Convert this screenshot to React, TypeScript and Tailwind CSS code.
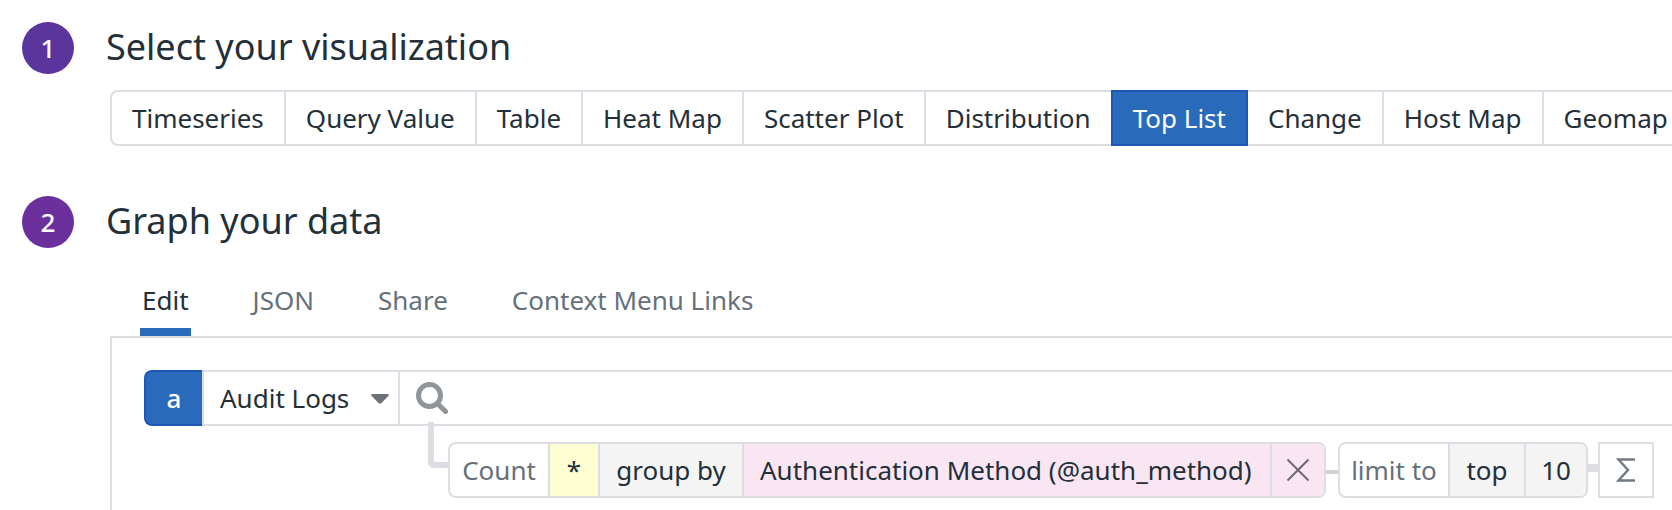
import { useState, type ReactNode } from "react";

const VISUALIZATIONS = [
  "Timeseries",
  "Query Value",
  "Table",
  "Heat Map",
  "Scatter Plot",
  "Distribution",
  "Top List",
  "Change",
  "Host Map",
  "Geomap",
];

const TABS = ["Edit", "JSON", "Share", "Context Menu Links"];

function StepHeading({ step, color, children }: { step: number; color: string; children: ReactNode }) {
  return (
    <div className="flex items-center gap-8">
      <span
        className={`flex size-[52px] shrink-0 items-center justify-center rounded-full font-medium text-white ${color}`}
      >
        {step}
      </span>
      <h2 className="pb-0.5 text-4xl">{children}</h2>
    </div>
  );
}

function VisualizationPicker() {
  const [selected, setSelected] = useState("Top List");
  return (
    <div className="mt-4 ml-[88px] flex">
      {VISUALIZATIONS.map((name) => (
        <button
          key={name}
          type="button"
          aria-pressed={selected === name}
          onClick={() => setSelected(name)}
          className={`-ml-0.5 h-14 shrink-0 border-2 px-5 first:ml-0 first:rounded-l-lg last:rounded-r-lg ${
            selected === name
              ? "relative border-[#1d56b6] bg-[#2a6aba] text-white"
              : "border-[#dedde3] bg-white"
          }`}
        >
          {name}
        </button>
      ))}
    </div>
  );
}

function TabBar() {
  const [active, setActive] = useState("Edit");
  return (
    <div role="tablist" className="mt-8 ml-[118px] flex gap-[60px]">
      {TABS.map((name) => (
        <button
          key={name}
          type="button"
          role="tab"
          aria-selected={active === name}
          onClick={() => setActive(name)}
          className={`h-14 shrink-0 border-b-8 px-0.5 pb-2 ${
            active === name ? "border-[#2a6aba]" : "border-transparent text-[#66707a]"
          }`}
        >
          {name}
        </button>
      ))}
    </div>
  );
}

function SearchRow() {
  return (
    <div className="flex h-14">
      <span className="flex w-[58px] shrink-0 items-center justify-center rounded-l-lg border-2 border-r-0 border-[#1d56b6] bg-[#2a6aba] font-medium text-white">
        a
      </span>
      <div className="relative w-[198px] shrink-0 border-2 border-[#dedde3]">
        <select
          aria-label="Data source"
          defaultValue="Audit Logs"
          className="h-full w-full appearance-none bg-transparent pl-4 outline-none"
        >
          <option>Audit Logs</option>
        </select>
        <svg
          viewBox="0 0 18 10"
          className="pointer-events-none absolute top-[22px] right-2 h-2.5 w-5 fill-[#6b7178]"
          aria-hidden="true"
        >
          <path d="M1 0H17Q18.500 .6 17.500 1.800L10.500 9Q9 10.400 7.500 9L.5 1.800Q-.5 .6 1 0Z" />
        </svg>
      </div>
      <label className="flex flex-1 items-center gap-4 border-y-2 border-[#dedde3] pl-4">
        <svg viewBox="0 0 32 32" className="size-8 shrink-0" fill="none" stroke="#8f9599" aria-hidden="true">
          <circle cx="13.500" cy="13.500" r="11" strokeWidth="5" />
          <path d="M21.500 21.500L29.500 29.500" strokeWidth="5" strokeLinecap="round" />
        </svg>
        <input type="text" aria-label="Search query" className="h-full min-w-0 flex-1 outline-none" />
      </label>
    </div>
  );
}

function AggregationRow() {
  return (
    <div className="-mt-1 ml-[284px] flex h-[76px] items-end whitespace-nowrap">
      <div className="mb-[30px] h-[46px] w-5 shrink-0 rounded-bl-md border-b-[6px] border-l-[6px] border-[#dedde3]" />
      <div className="flex h-14 shrink-0 divide-x-2 divide-[#dedde3] overflow-hidden rounded-lg border-2 border-[#dedde3]">
        <button type="button" className="w-[100px] text-[#66707a]">
          Count
        </button>
        <button type="button" className="w-[50px] bg-[#fefed3]">
          *
        </button>
        <span className="flex w-36 items-center justify-center bg-[#f4f4f4]">group by</span>
        <button type="button" className="w-[528px] bg-[#fae6f3] pl-4 text-left">
          Authentication Method (@auth_method)
        </button>
        <button
          type="button"
          aria-label="Remove group"
          className="flex w-[52px] items-center justify-center bg-[#fae6f3]"
        >
          <svg viewBox="0 0 24 24" className="size-6" fill="none" stroke="#6d6872" strokeWidth="2" aria-hidden="true">
            <path d="M1.500 1.500L22.500 22.500M22.500 1.500L1.500 22.500" />
          </svg>
        </button>
      </div>
      <div className="mb-6 h-1 w-3 shrink-0 bg-[#cfd2d3]" />
      <div className="flex h-14 shrink-0 divide-x-2 divide-[#dedde3] overflow-hidden rounded-lg border-2 border-[#dedde3]">
        <span className="flex w-[110px] items-center justify-center text-[#66707a]">limit to</span>
        <button type="button" className="w-[76px] bg-[#f4f4f4]">
          top
        </button>
        <button type="button" className="w-[60px] bg-[#f4f4f4]">
          10
        </button>
      </div>
      <div className="mb-[26px] h-2 w-2.5 shrink-0 bg-[#dedde3]" />
      <button
        type="button"
        aria-label="Add function"
        className="flex size-14 shrink-0 items-center justify-center border-2 border-[#dedde3]"
      >
        <svg viewBox="0 0 20 24" className="h-6 w-5" fill="none" stroke="#717a80" strokeWidth="2.400" aria-hidden="true">
          <path d="M19 1.500H2.500L12 12L2.500 22.500H19" />
        </svg>
      </button>
    </div>
  );
}

export default function App() {
  return (
    <main className="flex min-h-screen flex-col overflow-hidden bg-white pt-[22px] pl-[22px] font-['Noto_Sans',sans-serif] text-[26px] leading-9 text-[#232f39]">
      <section>
        <StepHeading step={1} color="bg-[#5b349c]">
          Select your visualization
        </StepHeading>
        <VisualizationPicker />
      </section>
      <section className="mt-[50px] flex flex-1 flex-col">
        <StepHeading step={2} color="bg-[#6c309d]">
          Graph your data
        </StepHeading>
        <TabBar />
        <div className="ml-[88px] flex-1 border-t-2 border-l-2 border-[#dedde3] pt-8 pl-8">
          <SearchRow />
          <AggregationRow />
        </div>
      </section>
    </main>
  );
}
